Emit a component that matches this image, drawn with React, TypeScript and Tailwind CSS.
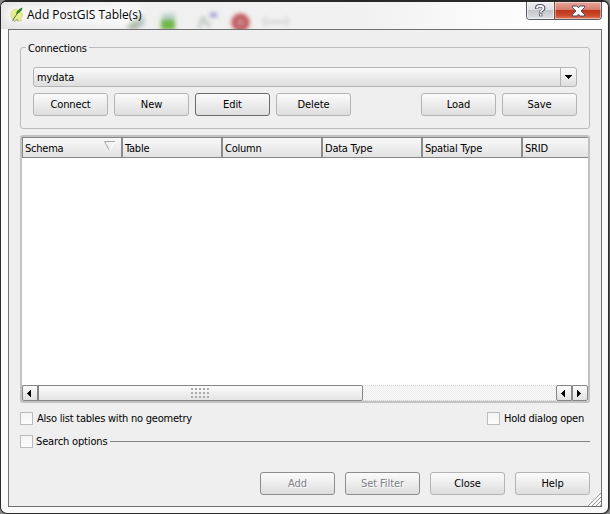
import type { ReactNode } from 'react';
import clsx from 'clsx';

const COLUMNS = ['Schema', 'Table', 'Column', 'Data Type', 'Spatial Type', 'SRID'];

type Tone = 'normal' | 'focus' | 'disabled';

function PushButton({ children, tone = 'normal' }: { children: ReactNode; tone?: Tone }) {
  return (
    <button
      className={clsx(
        'h-[23px] w-[75px] shrink-0 rounded-[3px] border bg-linear-to-b from-[#fbfbfb] to-[#dedede] text-center leading-[21px] tracking-[-0.1px]',
        tone === 'normal' && 'border-[#b4b4b4]',
        tone === 'focus' && 'border-[#6a6a6a]',
        tone === 'disabled' && 'border-[#8c8c8c] text-[#80808a] [text-shadow:1px_1px_0_#fff]',
      )}
    >
      {children}
    </button>
  );
}

function CheckBox() {
  return <span className="size-[13px] shrink-0 border border-[#bcbcbc] bg-linear-to-b from-[#f4f4f4] to-[#fdfdfd]" />;
}

function Arrow({ dir }: { dir: 'left' | 'right' }) {
  return (
    <svg width="4" height="7" viewBox="0 0 4 7" shapeRendering="crispEdges">
      <path d={dir === 'left' ? 'M3 0h1v7h-1v-1h-1v-1h-1v-1h-1v-1h1v-1h1v-1h1z' : 'M0 0h1v1h1v1h1v1h1v1h-1v1h-1v1h-1v1h-1z'} />
    </svg>
  );
}

function TitleBar() {
  return (
    <div className="relative flex h-[27px] overflow-hidden rounded-t-[5px] bg-[#f4f4f4]">
      {/* toolbar icons showing through the glass */}
      <svg className="absolute top-0 left-0" width="606" height="27" viewBox="2 2 606 27">
        <defs>
          <filter id="glass" x="-50%" y="-50%" width="200%" height="200%">
            <feGaussianBlur stdDeviation="2.1" />
          </filter>
          <filter id="glow" x="-20%" y="-80%" width="140%" height="260%">
            <feGaussianBlur stdDeviation="5" />
          </filter>
          <linearGradient id="sheen" x1="0" y1="0" x2="1" y2="0">
            <stop offset="0" stopColor="#e2e2e2" />
            <stop offset="0.2" stopColor="#f0f0f0" />
            <stop offset="0.6" stopColor="#f1f1f1" />
            <stop offset="0.8" stopColor="#fbfbfb" />
            <stop offset="1" stopColor="#fff" />
          </linearGradient>
        </defs>
        <rect x="2" y="2" width="606" height="27" fill="url(#sheen)" />
        <g filter="url(#glass)">
          <path d="M127 28l8-9 8-4v9l-6 5z" fill="#94a689" />
          <path d="M137 14l8 2v9l-6 2z" fill="#a7b6b6" />
          <rect x="163" y="13" width="13" height="8" fill="#c5d5d2" />
          <rect x="162" y="19" width="14" height="11" fill="#72b748" />
          <path d="M200 28l4-10 7 9" fill="none" stroke="#bcc5bc" strokeWidth="3" />
          <rect x="211" y="13" width="7" height="4" fill="#8e8ec9" />
          <circle cx="241.500" cy="22.500" r="6.500" fill="#cb8c8e" stroke="#bd4c50" strokeWidth="5" />
          <path d="M266 17v9M269 22h16M288 17v8" stroke="#c4c4c4" strokeWidth="2" />
        </g>
        <rect x="4" y="5" width="140" height="19" rx="9" fill="#fff" opacity="0.7" filter="url(#glow)" />
      </svg>
      <svg className="relative mt-[5px] ml-[9px] shrink-0" width="14" height="16" viewBox="0 0 14 16">
        <path d="M7 2.500C3.500 1.500 1 4.500 1 8s2 5 5 5c1.500 0 2 1.500 5.500 1 .5-1 0-2-1-2.500 1.800-1.500 2.500-3.500 1.500-6.500" fill="#e6f08a" stroke="#cdd58a" strokeWidth="0.8" />
        <path d="M3 13l2 1.500L7 12l1.500 2.500" fill="none" stroke="#9da184" />
        <path d="M6 7l1-3 3-2.500 2.500-1-.5 2.500L9 6z" fill="#2d861f" />
        <path d="M2.500 13.500L8 5.500" stroke="#5e6a4a" />
      </svg>
      <span className="relative mt-[3px] ml-[3px] h-[20px] font-['Open_Sans',sans-serif] text-[12px] leading-[20px] tracking-[-0.01px] whitespace-nowrap text-black">
        Add PostGIS Table(s)
      </span>
      <div className="relative mr-[6px] ml-auto flex h-[18px] w-[76px] overflow-hidden rounded-b-[4px] border border-t-0 border-[#595c66]">
        <div className="flex w-[27px] items-center justify-center bg-[linear-gradient(#f0f0f1_0%,#dedfe2_48%,#c3c5c9_50%,#dfe1e5_100%)] shadow-[inset_0_0_0_1px_#ffffff90]">
          <svg width="11" height="13" viewBox="0 0 11 13">
            <path d="M1.800 5V3.700C1.800 2 3.500 1.800 5.200 1.800s3.600.6 3.600 2.500C8.800 6.200 5.700 6 5.700 8.600M5.700 9.500v2.800" fill="none" stroke="#4c5065" strokeWidth="3.400" />
            <path d="M2 4.500V3.700C2 2.200 3.500 1.900 5.200 1.900s3.300.6 3.300 2.400C8.500 6.100 5.700 6 5.700 8.300M5.700 9.900v1.900" fill="none" stroke="#fff" strokeWidth="1.700" />
          </svg>
        </div>
        <div className="flex flex-1 items-center justify-center border-l border-[#79483f] bg-[linear-gradient(#e5a79a_0%,#d77b69_47%,#bd351d_50%,#cc4b2c_80%,#dc8066_100%)] shadow-[inset_0_0_0_1px_#ffffff70]">
          <svg width="13" height="12" viewBox="0 0 13 12">
            <path d="M.5 1h4.300l1.700 1.800L8.200 1h4.300v1.500L9 6l3.500 3.500V11H8.200L6.500 9.200 4.800 11H.5V9.500L4 6 .5 2.500z" fill="#fff" stroke="#4c4c64" />
          </svg>
        </div>
      </div>
    </div>
  );
}

function Connections() {
  return (
    <fieldset className="relative h-[82px] rounded-[3px] border border-[#bcbcbc] px-[12px] pt-[19px]">
      <span className="absolute -top-[7px] left-[5px] h-[16px] bg-[#efefef] px-[2px] leading-[16px]">Connections</span>
      <div className="flex h-[20px] rounded-[3px] border border-[#b4b4b4] bg-linear-to-b from-[#fafafa] to-[#dedede]">
        <span className="flex-1 pl-[3px] leading-[19px] tracking-[-0.1px]">mydata</span>
        <span className="flex w-[16px] items-center justify-center border-l border-[#b4b4b4]">
          <svg width="7" height="4" viewBox="0 0 7 4" shapeRendering="crispEdges">
            <path d="M0 0h7v1h-1v1h-1v1h-1v1h-1v-1h-1v-1h-1v-1h-1z" />
          </svg>
        </span>
      </div>
      <div className="mt-[6px] flex gap-[6px]">
        <PushButton>Connect</PushButton>
        <PushButton>New</PushButton>
        <PushButton tone="focus">Edit</PushButton>
        <PushButton>Delete</PushButton>
        <div className="flex-1" />
        <PushButton>Load</PushButton>
        <PushButton>Save</PushButton>
      </div>
    </fieldset>
  );
}

function TableList() {
  return (
    <div className="mt-[6px] flex h-[268px] flex-col overflow-hidden rounded-[3px] border-2 border-[#c2c2c2] bg-white">
      <div className="flex h-[21px] shrink-0 overflow-hidden border-y border-l border-[#858585] bg-linear-to-b from-[#f8f8f8] to-[#e3e3e3]">
        {COLUMNS.map((c) => (
          <div key={c} className="flex w-[100px] shrink-0 justify-between border-r-2 border-[#8b8b8b] pl-[2px] leading-[21px] whitespace-nowrap">
            {c}
            {c === 'Schema' && (
              <svg className="mt-[3px] mr-[5px]" width="12" height="11" viewBox="0 0 12 11">
                <path d="M11 .5H.5l5 9" fill="none" stroke="#a9a9a9" />
                <path d="M5.500 9.500l5-8.500" stroke="#fff" />
              </svg>
            )}
          </div>
        ))}
      </div>
      <div className="flex-1" />
      <div className="flex h-[16px] shrink-0 bg-[#f4f4f4]">
        <div className="flex w-[15px] items-center justify-center rounded-l-[2px] border border-r-0 border-[#858585] bg-linear-to-b from-[#fcfcfc] to-[#e0e0e0] pr-[2px]">
          <Arrow dir="left" />
        </div>
        <div className="flex w-[326px] items-center justify-center rounded-r-[2px] border border-l-2 border-[#858585] bg-linear-to-b from-[#fcfcfc] to-[#e4e4e4]">
          <div className="h-[11px] w-[19px] bg-[radial-gradient(circle_at_1px_1px,#aaa_1px,transparent_1px)] bg-[length:4px_4px]" />
        </div>
        <div className="flex-1 border-y border-dotted border-[#d2d2d2] bg-[repeating-conic-gradient(#ededed_0_25%,#fafafa_0_50%)] bg-[length:2px_2px]" />
        <div className="flex w-[16px] items-center justify-center rounded-l-[2px] border border-[#858585] bg-linear-to-b from-[#fcfcfc] to-[#e0e0e0] pr-[2px]">
          <Arrow dir="left" />
        </div>
        <div className="flex w-[16px] items-center justify-center rounded-r-[2px] border border-[#858585] bg-linear-to-b from-[#fcfcfc] to-[#e0e0e0] pr-[2px]">
          <Arrow dir="right" />
        </div>
      </div>
    </div>
  );
}

export default function App() {
  return (
    <div className="h-[514px] w-[610px] bg-[#888] font-['DejaVu_Sans_Condensed','Noto_Sans',sans-serif] text-[11px] tracking-[-0.23px] text-black">
      <div className="flex h-[514px] w-[609px] flex-col rounded-[7px] border-x border-t-2 border-b border-[#292929] bg-[#fafafa] shadow-[1px_0_0_#555]">
        <TitleBar />
        <div className="relative mx-[6px] ml-[7px] flex h-[478px] flex-col border border-[#717171] bg-[#efefef] pt-[17px] pr-[11px] pl-[11px]">
          <Connections />
          <TableList />
          <div className="mt-[9px] flex h-[13px] items-center">
            <CheckBox />
            <span className="ml-[4px] pt-[2px]">Also list tables with no geometry</span>
            <div className="flex-1" />
            <CheckBox />
            <span className="mr-[6px] ml-[4px] pt-[2px]">Hold dialog open</span>
          </div>
          <div className="mt-[10px] flex h-[13px] items-center">
            <CheckBox />
            <span className="mr-[3px] ml-[3px] pt-[2px] tracking-[-0.15px]">Search options</span>
            <div className="h-px flex-1 bg-[#858585]" />
          </div>
          <div className="mt-[24px] flex justify-end gap-[10px]">
            <PushButton tone="disabled">Add</PushButton>
            <PushButton tone="disabled">Set Filter</PushButton>
            <PushButton>Close</PushButton>
            <PushButton>Help</PushButton>
          </div>
          <svg className="absolute right-0 bottom-0" width="13" height="13" viewBox="0 0 13 13">
            <path d="M0 13L13 0M4 13l9-9M8 13l5-5M12 13l1-1" stroke="#9c9c9c" />
            <path d="M2 13L13 2M6 13l7-7M10 13l3-3" stroke="#fff" />
          </svg>
        </div>
      </div>
    </div>
  );
}
